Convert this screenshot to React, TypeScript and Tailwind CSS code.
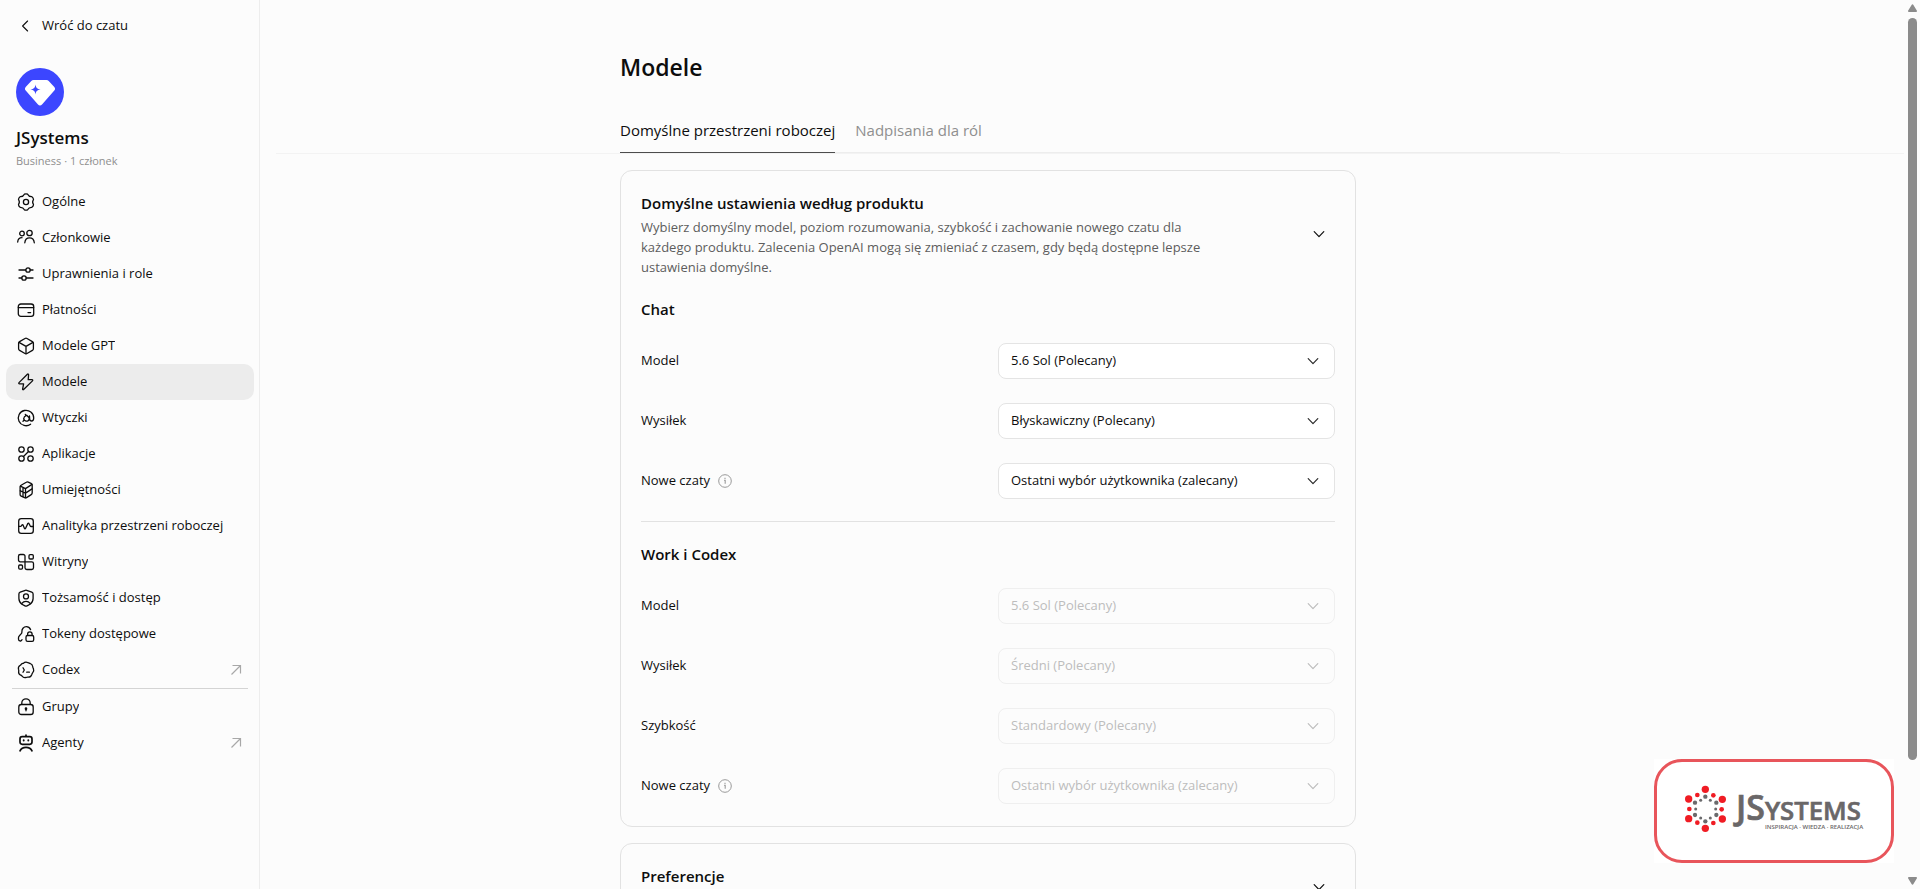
import type { ReactNode } from "react";
import clsx from "clsx";

function Icon({ children }: { children: ReactNode }) {
  return (
    <svg
      viewBox="0 0 20 20"
      className="size-5 flex-none"
      fill="none"
      stroke="currentColor"
      strokeWidth={1.3}
      strokeLinecap="round"
      strokeLinejoin="round"
      aria-hidden="true"
    >
      {children}
    </svg>
  );
}

const icons = {
  gear: (
    <Icon>
      <path d="M8.4 2.200Q10 1.400 11.600 2.200Q12.900 4.900 15.900 4.700Q17.400 5.700 17.500 7.500Q15.800 10 17.500 12.500Q17.400 14.300 15.900 15.300Q12.900 15.100 11.600 17.800Q10 18.600 8.400 17.800Q7.100 15.100 4.100 15.300Q2.600 14.300 2.500 12.500Q4.200 10 2.500 7.500Q2.600 5.700 4.100 4.700Q7.100 4.900 8.400 2.200Z" />
      <circle cx="10" cy="10" r="2.6" />
    </Icon>
  ),
  members: (
    <Icon>
      <circle cx="6" cy="5.5" r="2.3" />
      <circle cx="13.5" cy="5" r="2.7" />
      <path d="M1.7 14c.2-2.700 2-4.300 4.300-4.300M8.800 14.800c.3-3 2.200-4.900 4.700-4.900s4.500 1.900 4.800 4.900" />
    </Icon>
  ),
  sliders: (
    <Icon>
      <circle cx="12" cy="6" r="2.2" />
      <circle cx="8" cy="14" r="2.2" />
      <path d="M3 6h6.800M14.200 6H17M3 14h2.800M10.200 14H17" />
    </Icon>
  ),
  card: (
    <Icon>
      <rect x="2.3" y="4" width="15.4" height="12.4" rx="2.6" />
      <path d="M2.300 7.600h15.400M12 12.600h2.600" />
    </Icon>
  ),
  cube: (
    <Icon>
      <path d="M9 2.500a2 2 0 0 1 2 0l5.400 3.100a2 2 0 0 1 1 1.700v5.400a2 2 0 0 1-1 1.700L11 17.500a2 2 0 0 1-2 0l-5.400-3.100a2 2 0 0 1-1-1.700V7.300a2 2 0 0 1 1-1.700Z" />
      <path d="m3 6.400 7 4 7-4M10 10.400v7.300" />
    </Icon>
  ),
  bolt: (
    <Icon>
      <path d="M11.400 2.300 3 10.600c-.5.500-.2 1.200.5 1.200h4.100l-1 5.300c-.1.700.5.900 1 .4l8.900-8.600c.5-.5.2-1.200-.5-1.200h-3.800l.4-4.900c0-.8-.7-1-1.200-.5Z" />
    </Icon>
  ),
  plugin: (
    <Icon>
      <path d="M14.600 16.200a7.700 7.700 0 1 1 3.100-6.200c0 1.900-.8 3-2.200 3-1 0-1.600-.6-2-1.400" />
      <path d="m10.700 7.300 2.200 2.200c.7 1.300.1 2.800-1 3.300-1.200.6-2.500.3-3.400-.6-.9-1-.9-2.400-.1-3.400Zm0 0-2.300 1.500M9.300 6.400l.7 1.100M13.500 8l.2 3.600M7 13.200l1-.9" />
    </Icon>
  ),
  apps: (
    <Icon>
      <circle cx="5.5" cy="5.5" r="2.700" />
      <circle cx="14.5" cy="5.5" r="2.700" />
      <circle cx="5.5" cy="14.5" r="2.700" />
      <circle cx="14.5" cy="14.5" r="2.700" />
      <path d="m7.500 12.500 5-5" />
    </Icon>
  ),
  skills: (
    <Icon>
      <path d="M10.300 2.200a2 2 0 0 1 1.900-.1l2.800 1.300c.8.400 1.200 1 1.200 1.800v7.600c0 .8-.3 1.400-1 1.800l-4.600 3c-.6.400-1.300.4-2 .1l-3.400-1.600c-.7-.3-1.100-1-1.100-1.700V7c0-.8.300-1.400 1-1.800Z" />
      <path d="m4.400 6.200 5.100 2.400 6.500-4.200M9.500 8.600v9.100M9.500 13.100l6.500-4.200M4.300 10.800l5.200 2.300M7 7.500v9" />
    </Icon>
  ),
  analytics: (
    <Icon>
      <rect x="2.7" y="2.7" width="14.6" height="14.6" rx="2.6" />
      <path d="M2.900 10.400h1.600c.5 0 .8-.2 1-.6l.5-.9c.3-.4.8-.4 1 0l1.500 3.500c.2.500.8.500 1 .1l2.400-5.100c.2-.5.900-.5 1.100 0l1.200 2.600c.2.400.5.500.9.500h2" />
    </Icon>
  ),
  sites: (
    <Icon>
      <path d="M9 9.800H4.300a1.800 1.800 0 0 1-1.800-1.800V4.300c0-1 .8-1.800 1.800-1.800h2.900C8.200 2.500 9 3.300 9 4.300v11.400c0 1 .8 1.800 1.800 1.800h4.900c1 0 1.800-.8 1.800-1.800v-4.100c0-1-.8-1.800-1.800-1.800Z" />
      <rect x="13" y="2.700" width="4.3" height="4.3" rx="1.1" />
      <rect x="2.7" y="13" width="3.8" height="4.2" rx="1.1" />
    </Icon>
  ),
  identity: (
    <Icon>
      <path d="M9.300 2.300a2 2 0 0 1 1.400 0l5.100 1.900c.8.300 1.300 1 1.300 1.800v4.600c0 2.600-1 4.200-3 5.600l-3.100 1.700a2 2 0 0 1-2 0l-3.100-1.700c-2-1.400-3-3-3-5.600V6c0-.8.500-1.500 1.300-1.800Z" />
      <circle cx="10" cy="8.400" r="2.5" />
      <path d="M5.700 15.600c1.100-1.500 2.600-2.200 4.300-2.200s3.200.7 4.300 2.200" />
    </Icon>
  ),
  tokens: (
    <Icon>
      <path d="M14.600 5.600C13.700 3.700 12.300 2.700 10.400 2.700c-2.900 0-4.700 2.400-4.500 5 .1.900-.2 1.600-.8 2.200l-1.700 1.800c-.6.600-.9 1.200-.9 2v1.500c0 1 .8 1.800 1.800 1.800h.4c.8 0 1.100-.5 1.300-1.300" />
      <rect x="10" y="11.5" width="7.7" height="5.8" rx="1.6" />
      <path d="M11.600 11.300v-1.200a2.200 2.200 0 0 1 4.500 0v1.200" />
    </Icon>
  ),
  codex: (
    <Icon>
      <path d="M7.200 3.400Q9.500 1.300 12 2.700Q13.200 3.300 14.200 3.500Q16.400 4.200 16.700 6.500Q16.800 7.600 17.400 8.600Q18.400 11 16.600 12.900Q16 13.700 15.700 14.700Q14.800 17.200 12.100 17.100Q11 17 10 17.500Q7.500 18.200 6 16Q5.400 15.300 4.300 14.900Q2.200 13.700 2.700 11.300Q2.900 10.300 2.500 9.200Q1.900 6.800 4 5.500Q4.800 5 5.200 4.400Q6 3.300 7.200 3.400Z" />
      <path d="m7 7.700 1.300 2.300L7 12.300M10.700 12.200h2.700" />
    </Icon>
  ),
  lock: (
    <Icon>
      <rect x="2.8" y="7.5" width="14.4" height="10" rx="2.6" />
      <path d="M5.800 7.300V6a4.200 4.200 0 0 1 8.400 0v1.300M10 12v1.800" />
      <circle cx="10" cy="11.7" r=".7" fill="currentColor" />
    </Icon>
  ),
  agent: (
    <Icon>
      <path
        strokeWidth={1.7}
        d="M6.200 3.700h7.600c1.400 0 2.200.8 2.200 2.200v3.200c0 1.400-.8 2.200-2.200 2.200H6.200c-1.400 0-2.200-.8-2.200-2.200V5.900c0-1.400.8-2.200 2.200-2.200ZM10 2v1.500M4 17.800c1-2.200 3-3.400 6-3.400s5 1.200 6 3.400"
      />
      <path strokeWidth={1.9} d="M7.700 7.300v.3M12.300 7.300v.3" />
    </Icon>
  ),
};

interface NavItem {
  label: string;
  icon: keyof typeof icons;
  external?: boolean;
}

const workspaceNav: NavItem[] = [
  { label: "Ogólne", icon: "gear" },
  { label: "Członkowie", icon: "members" },
  { label: "Uprawnienia i role", icon: "sliders" },
  { label: "Płatności", icon: "card" },
  { label: "Modele GPT", icon: "cube" },
  { label: "Modele", icon: "bolt" },
  { label: "Wtyczki", icon: "plugin" },
  { label: "Aplikacje", icon: "apps" },
  { label: "Umiejętności", icon: "skills" },
  { label: "Analityka przestrzeni roboczej", icon: "analytics" },
  { label: "Witryny", icon: "sites" },
  { label: "Tożsamość i dostęp", icon: "identity" },
  { label: "Tokeny dostępowe", icon: "tokens" },
  { label: "Codex", icon: "codex", external: true },
];

const otherNav: NavItem[] = [
  { label: "Grupy", icon: "lock" },
  { label: "Agenty", icon: "agent", external: true },
];

interface Setting {
  label: string;
  value: string;
  info?: boolean;
}

const chatSettings: Setting[] = [
  { label: "Model", value: "5.6 Sol (Polecany)" },
  { label: "Wysiłek", value: "Błyskawiczny (Polecany)" },
  { label: "Nowe czaty", value: "Ostatni wybór użytkownika (zalecany)", info: true },
];

const workSettings: Setting[] = [
  { label: "Model", value: "5.6 Sol (Polecany)" },
  { label: "Wysiłek", value: "Średni (Polecany)" },
  { label: "Szybkość", value: "Standardowy (Polecany)" },
  { label: "Nowe czaty", value: "Ostatni wybór użytkownika (zalecany)", info: true },
];

function Chevron({ className }: { className?: string }) {
  return (
    <svg
      viewBox="0 0 16 16"
      className={clsx("size-4", className)}
      fill="none"
      stroke="currentColor"
      strokeWidth={1.2}
      strokeLinecap="round"
      strokeLinejoin="round"
      aria-hidden="true"
    >
      <path d="m3.200 5.700 4.800 4.900 4.800-4.900" />
    </svg>
  );
}

function NavLink({ item, active = false }: { item: NavItem; active?: boolean }) {
  return (
    <a
      href="#"
      aria-current={active ? "page" : undefined}
      className={clsx("flex h-9 items-center gap-1.5 rounded-[10px] px-2.5", active && "bg-[#ececec]")}
    >
      {icons[item.icon]}
      <span className="truncate">{item.label}</span>
      {item.external && (
        <svg
          viewBox="0 0 16 16"
          className="ml-auto size-4 flex-none text-[#a8a8a8]"
          fill="none"
          stroke="currentColor"
          strokeWidth={1.2}
          aria-hidden="true"
        >
          <path d="m3.500 12.500 9-9M4.500 3.500h8v8" />
        </svg>
      )}
    </a>
  );
}

function Sidebar() {
  return (
    <aside className="flex w-[260px] flex-none flex-col border-r border-[#ededed] pr-[5px] pl-1.5 text-[13px]">
      <a href="#" className="mt-2 flex h-9 items-center gap-1.5 px-2.5">
        <Icon>
          <path strokeWidth={1.1} d="m11.600 5-5 5 5 5" />
        </Icon>
        Wróć do czatu
      </a>
      <div className="mt-6 mb-3.5 px-2.5">
        <svg viewBox="0 0 48 48" className="size-12" aria-hidden="true">
          <circle cx="24" cy="24" r="24" fill="#3c46ff" />
          <path
            fill="#fff"
            d="M17.500 12h13c.9 0 1.600.3 2.200.9l5.600 6c1 1.100 1 2.600 0 3.700L26 36.500c-1.100 1.300-2.900 1.300-4 0L9.700 22.600c-1-1.100-1-2.600 0-3.700l5.600-6c.6-.6 1.300-.9 2.200-.9Z"
          />
          <path
            fill="#3c46ff"
            d="M19.500 16.500c.6 3.500 1.500 4.400 5 5-3.500.6-4.400 1.500-5 5-.6-3.500-1.500-4.400-5-5 3.500-.6 4.400-1.500 5-5Z"
          />
        </svg>
        <h2 className="mt-2.5 text-[17px] leading-6 font-semibold">JSystems</h2>
        <p className="mt-0.5 text-[11px] leading-[18px] text-[#8f8f8f]">Business · 1 członek</p>
      </div>
      <nav aria-label="Ustawienia przestrzeni roboczej">
        {workspaceNav.map((item) => (
          <NavLink key={item.label} item={item} active={item.label === "Modele"} />
        ))}
        <hr className="mx-1.5 border-[#d4d4d4]" />
        {otherNav.map((item) => (
          <NavLink key={item.label} item={item} />
        ))}
      </nav>
    </aside>
  );
}

function SettingRow({ id, setting, disabled }: { id: string; setting: Setting; disabled: boolean }) {
  return (
    <div className="grid grid-cols-2 items-center gap-5">
      <div className="flex items-center gap-2">
        <label htmlFor={id}>{setting.label}</label>
        {setting.info && (
          <svg
            viewBox="0 0 14 14"
            className="size-3.5 text-[#9a9a9a]"
            fill="none"
            stroke="currentColor"
            aria-hidden="true"
          >
            <circle cx="7" cy="7" r="6.3" />
            <path d="M6 6.300h1.200v3.500M7 3.800v1.200" strokeWidth={1.1} />
          </svg>
        )}
      </div>
      <div className={clsx("relative", disabled && "text-[#bdbdbd]")}>
        <select
          id={id}
          disabled={disabled}
          className={clsx(
            "h-9 w-full appearance-none rounded-lg border pr-9 pl-3 opacity-100",
            disabled ? "border-[#efefef] bg-[#fcfcfc]" : "border-[#e4e4e4] bg-white",
          )}
        >
          <option>{setting.value}</option>
        </select>
        <Chevron
          className={clsx("pointer-events-none absolute top-2.5 right-3.5", !disabled && "text-[#2a2a2a]")}
        />
      </div>
    </div>
  );
}

interface SettingGroupProps {
  title: string;
  prefix: string;
  settings: Setting[];
  disabled?: boolean;
}

function SettingGroup({ title, prefix, settings, disabled = false }: SettingGroupProps) {
  return (
    <section className="pt-5 pb-[22px]">
      <h3 className="text-[15px] leading-6 font-semibold">{title}</h3>
      <div className="mt-[22px] flex flex-col gap-6 text-[13px]">
        {settings.map((s, i) => (
          <SettingRow key={s.label} id={`${prefix}-${i}`} setting={s} disabled={disabled} />
        ))}
      </div>
    </section>
  );
}

function Card({ title, description, children }: { title: string; description?: string; children?: ReactNode }) {
  return (
    <section className="max-w-[736px] rounded-xl border border-[#e2e2e2] px-5 pt-5">
      <div className="flex min-h-[46px] items-center justify-between">
        <div className="max-w-[590px] self-start">
          <h2 className="text-[15px] leading-6 font-semibold">{title}</h2>
          {description && <p className="mt-0.5 text-[13px] leading-5 text-[#5d5d5d]">{description}</p>}
        </div>
        <button type="button" aria-label={title} className="flex size-8 items-center justify-center">
          <Chevron />
        </button>
      </div>
      {children}
    </section>
  );
}

const bigDots = [[196, 148], [146, 177], [247, 178], [146, 236], [247, 237], [196, 265]];
const midDots = [[172, 165], [220, 166], [148, 207], [245, 208], [172, 248], [220, 249]];
const grayDots = [[196, 170], [165, 188], [229, 188], [165, 225], [229, 225], [196, 244]];
const tinyDots = [[182, 181], [211, 181], [167, 207], [227, 207], [182, 234], [211, 234]];

function Dots({ points, r, fill }: { points: number[][]; r: number; fill: string }) {
  return (
    <g fill={fill}>
      {points.map(([x, y]) => (
        <circle key={`${x}-${y}`} cx={x} cy={y} r={r} />
      ))}
    </g>
  );
}

function BrandBadge() {
  return (
    <div className="absolute right-[26px] bottom-[26px] bg-white">
      <div className="rounded-[28px] border-3 border-[#e8555b]">
        <svg viewBox="51 66 702 294" className="h-[98px] w-[234px]" role="img" aria-label="JSystems">
          <Dots points={bigDots} r={11} fill="#f01c24" />
          <Dots points={midDots} r={7} fill="#f01c24" />
          <Dots points={grayDots} r={6.5} fill="#6a6a6c" />
          <Dots points={tinyDots} r={4.5} fill="#6a6a6c" />
          <g fill="#6a6768" fontFamily="Open Sans, sans-serif" fontWeight="600">
            <text x="288" y="240" fontSize="102" stroke="#6a6768" strokeWidth="2">
              JS<tspan fontSize="77">YSTEMS</tspan>
            </text>
            <text x="375" y="268" fontSize="18">
              INSPIRACJA · WIEDZA · REALIZACJA
            </text>
          </g>
        </svg>
      </div>
    </div>
  );
}

function ScrollRail() {
  return (
    <div className="flex w-4 flex-none flex-col items-center py-1 text-[#8b8b8b]" aria-hidden="true">
      <svg viewBox="0 0 9 8" className="h-2 w-[9px]" fill="currentColor">
        <path d="M3.600.9a1 1 0 0 1 1.800 0L8.800 6.500A1 1 0 0 1 8 8H1A1 1 0 0 1 .2 6.500Z" />
      </svg>
      <div className="my-1.5 w-[9px] flex-1">
        <div className="h-[87%] rounded-full bg-[#8b8b8b]" />
      </div>
      <svg viewBox="0 0 9 8" className="h-2 w-[9px]" fill="currentColor">
        <path d="M3.600 7.100a1 1 0 0 0 1.800 0L8.800 1.500A1 1 0 0 0 8 0H1A1 1 0 0 0 .2 1.500Z" />
      </svg>
    </div>
  );
}

export default function App() {
  return (
    <div className="relative flex h-screen overflow-hidden bg-[#fcfcfc] font-['Open_Sans',sans-serif] text-[#0d0d0d]">
      <Sidebar />
      <main className="min-w-0 flex-1 pl-4">
        <header className="border-b border-[#f3f3f3] pt-[51px]">
          <div className="mx-auto max-w-[940px]">
            <h1 className="text-[23px] leading-8 font-semibold">Modele</h1>
            <div role="tablist" className="mt-[35px] flex gap-5 border-b border-[#ededed] text-[15px] leading-6">
              <button role="tab" aria-selected="true" className="-mb-px border-b border-[#4d4d4d] pb-2.5">
                Domyślne przestrzeni roboczej
              </button>
              <button
                role="tab"
                aria-selected="false"
                className="-mb-px border-b border-transparent pb-2.5 text-[#8f8f8f]"
              >
                Nadpisania dla ról
              </button>
            </div>
          </div>
        </header>
        <div className="mx-auto flex max-w-[940px] flex-col gap-4 pt-4">
          <Card
            title="Domyślne ustawienia według produktu"
            description="Wybierz domyślny model, poziom rozumowania, szybkość i zachowanie nowego czatu dla każdego produktu. Zalecenia OpenAI mogą się zmieniać z czasem, gdy będą dostępne lepsze ustawienia domyślne."
          >
            <SettingGroup title="Chat" prefix="chat" settings={chatSettings} />
            <hr className="border-[#e2e2e2]" />
            <SettingGroup title="Work i Codex" prefix="work" settings={workSettings} disabled />
          </Card>
          <Card title="Preferencje" />
        </div>
      </main>
      <ScrollRail />
      <BrandBadge />
    </div>
  );
}
